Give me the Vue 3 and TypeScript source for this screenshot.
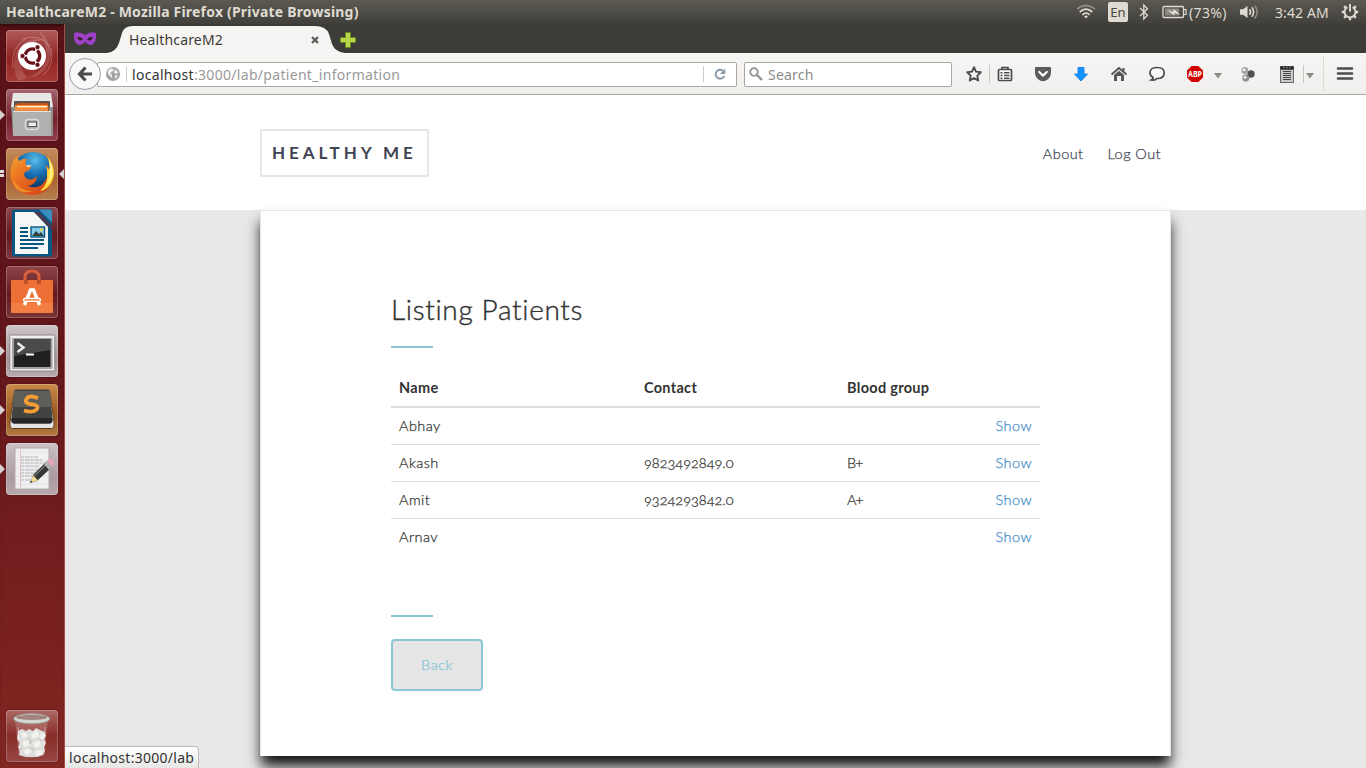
<script setup lang="ts">
interface Patient {
  name: string
  contact: string
  blood: string
}

const patients: Patient[] = [
  { name: 'Abhay', contact: '', blood: '' },
  { name: 'Akash', contact: '9823492849.0', blood: 'B+' },
  { name: 'Amit', contact: '9324293842.0', blood: 'A+' },
  { name: 'Arnav', contact: '', blood: '' },
]
</script>

<template>
  <div class="desktop">
    <header class="panel">
      <span class="window-title">HealthcareM2 - Mozilla Firefox (Private Browsing)</span>
      <div class="indicators">
        <svg class="wifi" width="20" height="16" viewBox="0 0 20 16" fill="none" stroke-width="1.7">
          <path d="M1 5.2Q10-2.2 19 5.2" stroke="#8e8b82" />
          <path d="M3.7 8Q10 2.2 16.3 8M6.4 10.8Q10 7.2 13.6 10.8" stroke="#dfdbd2" />
          <path d="M8 12.2Q10 10.8 12 12.2L10 14.4z" fill="#dfdbd2" />
        </svg>
        <span class="lang">En</span>
        <svg class="bt" width="10" height="18" viewBox="0 0 10 18" fill="none" stroke="#dfdbd2" stroke-width="1.3">
          <path d="M1 5L8.5 12.3 4.8 16V2L8.5 5.7 1 13" />
        </svg>
        <svg class="battery" width="25" height="14" viewBox="0 0 25 14">
          <rect x="1" y="1.5" width="20.5" height="11" rx="1" fill="none" stroke="#dfdbd2" stroke-width="1.3" />
          <path d="M22 4.5h2v5h-2" fill="none" stroke="#dfdbd2" stroke-width="1.2" />
          <rect x="3" y="3.5" width="14" height="7" fill="#8d8a81" />
          <path d="M5 4.5l6.5 2.8V4l7 6-6.2-2.4v2.9z" fill="#f1eee7" />
        </svg>
        <span class="percent">(73%)</span>
        <svg class="volume" width="20" height="16" viewBox="0 0 20 16" fill="none" stroke-width="1.6">
          <path d="M0 5.2h3L7.5 2v12L3 10.8H0z" fill="#dfdbd2" />
          <path d="M9.6 5.3Q11.5 8 9.6 10.7M12 3.3Q15.2 8 12 12.7" stroke="#dfdbd2" />
          <path d="M14.8 1.5Q19.6 8 14.8 14.5" stroke="#8e8b82" />
        </svg>
        <span class="clock">3:42 AM</span>
        <svg class="gear" width="18" height="18" viewBox="-9 -9 18 18" fill="none" stroke="#dfdbd2">
          <path d="M-2.6-4.9A5.5 5.5 0 1 0 2.6-4.9" stroke-width="1.9" />
          <path d="M0-8V-.5" stroke-width="1.9" />
          <path d="M6 0H8.2M-6 0H-8.2M0 6V8.2M4.2 4.2l1.6 1.6M-4.2 4.2l-1.6 1.6M4.2-4.2l1.6-1.6M-4.2-4.2l-1.6-1.6" stroke-width="2.4" />
        </svg>
      </div>
    </header>

    <div class="workspace">
      <nav class="launcher">
        <div class="tile dash">
          <svg viewBox="0 0 52 52">
            <path d="M12 51Q3 30 14 17Q24 6 41 10Q24 10 17 21Q10 34 21 48Z" fill="#fff" opacity=".14" />
            <path d="M33 1Q49 15 44 31Q38 46 21 48Q36 43 40 30Q43 17 33 1Z" fill="#fff" opacity=".16" />
            <path d="M7 38Q4 19 19 9M45 18Q49 35 37 45M16 9Q34 3 43 16" fill="none" stroke="#f4cdc8" stroke-opacity=".35" />
            <circle cx="26" cy="26" r="14" fill="#fff" />
            <circle cx="26.5" cy="26" r="7.2" fill="none" stroke="#671018" stroke-width="3.3" stroke-dasharray="13.1 2" stroke-dashoffset="6.5" />
            <g fill="#671018" stroke="#fff" stroke-width=".7"><circle cx="16.5" cy="26" r="2.5" /><circle cx="31.5" cy="17.2" r="2.5" /><circle cx="31.5" cy="34.8" r="2.5" /></g>
          </svg>
        </div>
        <div class="tile files running">
          <svg viewBox="0 0 52 52">
            <path d="M7 4h38l2 14H5z" fill="#e7e7e5" /><path d="M8 12h36v11H8z" fill="#5d5350" />
            <path d="M9 16l4-2h29l1 8H9z" fill="#c55316" /><path d="M9 16h33v6H9z" fill="#ef8e43" />
            <path d="M11 17h30v1.3H11z" fill="#fff1d2" /><path d="M5 18h4v5h34v-5h4v29H7z" fill="#8e8e8c" />
            <rect x="7" y="22" width="38" height="25" rx="1" fill="#b0b0ae" /><path d="M7 22h38v1H7z" fill="#e0e0df" />
            <rect x="19.5" y="30.5" width="13" height="10" rx="2.5" fill="#aaa" stroke="#ddd" stroke-width="1.4" />
            <rect x="22" y="33" width="8.5" height="4.5" fill="#eee" stroke="#55534f" />
          </svg>
        </div>
        <div class="tile firefox running double focused">
          <svg viewBox="0 0 52 52">
            <defs>
              <radialGradient id="globe" cx=".55" cy=".2" r=".7"><stop stop-color="#57bce7" /><stop offset=".55" stop-color="#166caf" /><stop offset="1" stop-color="#07335f" /></radialGradient>
              <linearGradient id="fox" x1="0" y1="0" x2="1" y2="1"><stop stop-color="#f5a029" /><stop offset=".45" stop-color="#e86821" /><stop offset="1" stop-color="#ca3b15" /></linearGradient>
            </defs>
            <circle cx="27" cy="24" r="20" fill="url(#globe)" />
            <path d="M41 9C50 17 50 34 41 41C34 49 17 49 9 40C2 31 4 19 8 12L11 8Q12 11 13 13Q17 10 21 11Q19 13 20 17L25 18Q25 22 19 24Q17 27 20 30Q25 34 31 28Q31 36 22 38Q33 42 39 33Q43 28 40 17Q44 20 43 23Q45 16 41 9Z" fill="url(#fox)" />
            <path d="M41 9C50 17 50 32 42 39Q39 42 34 43Q43 35 41 26Q42 21 39 17L43 22Q45 16 41 9Z" fill="#ffd839" />
            <path d="M43 12Q48 20 46 29Q43 35 40 37Q46 27 44 21Z" fill="#fff38e" /><path d="M20 17l6 .5-4 2z" fill="#f8e6ca" />
            <path d="M7 31Q12 43 27 43Q16 47 9 39z" fill="#f2a435" opacity=".7" />
          </svg>
        </div>
        <div class="tile writer">
          <svg viewBox="0 0 52 52">
            <path d="M8 2.5h36q2 0 2 2v43q0 2-2 2H8q-2 0-2-2v-43q0-2 2-2z" fill="#075683" /><path d="M9 5h19l14 15v27H9z" fill="#f5f6f6" />
            <path d="M33 2.5h11q2 0 2 2v11z" fill="#398ebb" /><path d="M28 5h5l13 14v4z" fill="#7d232c" opacity=".6" />
            <path d="M14 21h8M14 25h8M14 29h8M14 33h24M14 37h24M14 41h18" stroke="#075683" stroke-width="1.8" />
            <rect x="25" y="20" width="13.5" height="10" fill="#87cbea" stroke="#075683" stroke-width="1.4" />
            <path d="M26 29l4-5 3 3 2-2 3 4z" fill="#33413f" /><circle cx="35.5" cy="22.7" r="1.6" fill="#e9d547" />
          </svg>
        </div>
        <div class="tile software">
          <svg viewBox="0 0 52 52">
            <rect x="5" y="14" width="42" height="33" rx="1" fill="#ed7136" /><path d="M5 37h42v10H5z" fill="#fc995d" opacity=".35" />
            <path d="M19 17v-7Q20 5 26 5t7 5v7" fill="none" stroke="#d8603d" stroke-width="3" /><path d="M18 14v4h4v-4M31 14v4h4v-4" fill="#bc4f2e" />
            <path d="M18.5 39L24.5 24h3l6 15" fill="none" stroke="#fff" stroke-width="3.4" /><rect x="17.5" y="32.5" width="17" height="2.8" rx="1.4" fill="#ee7137" stroke="#fff" stroke-width="1.4" />
          </svg>
        </div>
        <div class="tile terminal running">
          <svg viewBox="0 0 52 52">
            <rect x="3.8" y="10" width="45" height="36" rx="1.5" fill="#eee" stroke="#898785" /><rect x="6" y="13" width="40.5" height="31" fill="#a5a3a2" />
            <rect x="8" y="14" width="36.5" height="28" fill="#20201f" /><path d="M8 14h36.5v11L8 31z" fill="#6d6d6b" opacity=".55" />
            <path d="M11.5 18l6 4.5-6 4.5" fill="none" stroke="#eee" stroke-width="2.4" /><path d="M20 29.5h8" stroke="#fff" stroke-width="2" />
          </svg>
        </div>
        <div class="tile sublime running">
          <svg viewBox="0 0 52 52">
            <path d="M8 10L4 38v4q0 2.5 2.5 2.5h39q2.5 0 2.5-2.5v-4L44 10z" fill="#e5e4e2" stroke="#5a3a1c" />
            <path d="M10 5.5h32q2 0 2 2l2.5 28q0 4-3 4h-35q-3 0-3-4L8 7.5q0-2 2-2z" fill="#424241" /><path d="M8 7h36l2 16H6.5z" fill="#777774" opacity=".5" />
            <path d="M5.7 34h40.6v2.5q0 3-3 3h-35q-3 0-3-3z" fill="#272726" />
            <path d="M32 14.2Q22 10 20 16Q19 20 27 20.5Q34 22 30 26Q26 29 18 26.5" fill="none" stroke="#f79d35" stroke-width="3.8" />
          </svg>
        </div>
        <div class="tile editor running">
          <svg viewBox="0 0 52 52">
            <path d="M9 5h34v41H9z" fill="#f0eff0" stroke="#b1abac" /><path d="M14.5 5v41" stroke="#efb8bc" />
            <path d="M10 9h32M10 17h32M10 25h32M10 33h32M10 41h32" stroke="#dde4ec" />
            <path d="M15 14h17M15 17h21M15 20h24M15 23h18M15 27h21M15 30h16M15 33h15M15 37h10" stroke="#a5a2a4" stroke-width=".8" stroke-dasharray="3 .8 5 .6" />
            <path d="M24 40l3-8L41 18l5 6-15 14z" fill="#353734" /><path d="M28.5 33L42 19.5" stroke="#777" stroke-width="1.2" /><path d="M24 40l3-8 5 5.5z" fill="#eeda94" /><path d="M24 40l1-2.5 1.7 1.6z" fill="#333" />
            <path d="M38 21l3-3 5 6-3 3z" fill="#afb4b5" /><path d="M41 18q3-4 6 0 2 3-1 6z" fill="#eca2bc" />
          </svg>
        </div>
        <div class="tile trash">
          <svg viewBox="0 0 52 52">
            <path d="M9 9h33l-3.5 36q-13 5-26 0z" fill="#e5b8b1" opacity=".28" />
            <path d="M12 21l4-2 4 2 3-2 4 2 3-3 4 2 5 2 1 4-2 3 2 4-2 4 1 4-2 4-6 2H20l-7-2 1-4-2-4 2-4-3-4z" fill="#dededb" />
            <path d="M15 23l4-1 3 4-5 2zM25 24l6-4 2 6-6 3zM35 23l4 2-3 5-3-3zM16 32l5-2 3 5-6 2zM27 33l6-2 2 5-6 2zM17 41l5-3 4 4-6 3zM29 41l6-1 2 4-7 2z" fill="#f2f2f0" />
            <path d="M22 28l3 3-1 3M33 28l3 3M25 38l3 2M13 38l3 1" stroke="#b9b5b2" fill="none" />
            <ellipse cx="25.7" cy="8.8" rx="18" ry="5" fill="#d4d8d3" stroke="#999f99" /><ellipse cx="25.7" cy="7.4" rx="15.5" ry="2.6" fill="#a18480" />
            <path d="M12 17l2 25M39 17l-2 25" stroke="#fff" opacity=".4" />
          </svg>
        </div>
      </nav>

      <main class="browser">
        <div class="tabstrip">
          <svg class="mask" width="24" height="16" viewBox="0 0 24 16">
            <path d="M1 2Q6 0 12 4Q18 0 23 2Q24 12 18 14Q14 14 12 10.5Q10 14 6 14Q0 12 1 2z" fill="#9d42c7" />
            <path d="M4 6.2q4-1 6 2.2-4 2.8-6-2.2zM20 6.2q-4-1-6 2.2 4 2.8 6-2.2z" fill="#34252f" />
          </svg>
          <div class="tab">
            <svg class="tab-shape" width="240" height="29" viewBox="0 0 240 29">
              <path d="M0 29Q9 28 12 19L15 9Q17 2 26 2H208Q219 2 222 10L225 20Q228 28 238 29z" fill="#f6f5f3" />
            </svg>
            <span class="tab-label">HealthcareM2</span>
            <svg class="close" width="8" height="8" viewBox="0 0 8 8"><path d="M1 1l6 6M7 1L1 7" stroke="#595957" stroke-width="2.2" /></svg>
          </div>
          <svg class="plus" width="16" height="16" viewBox="0 0 16 16"><path d="M5.5.5h5v5h5v5h-5v5h-5v-5h-5v-5h5z" fill="#b9d64b" stroke="#658b20" /></svg>
        </div>

        <div class="toolbar">
          <div class="back-button">
            <svg width="16" height="16" viewBox="0 0 16 16" fill="none" stroke="#4c4c4c" stroke-width="3.2"><path d="M8.5 1.5L2.5 8l6 6.5M3 8h12" /></svg>
          </div>
          <div class="urlbar">
            <svg class="globe" width="14" height="14" viewBox="0 0 14 14"><circle cx="7" cy="7" r="7" fill="#a2a2a2" /><path d="M2 3l4-2 2 2-2 2-2 1 2 2v3L4 9 2 7zM9 2l3 3-1 2-3-1zM9 8l3 1-3 3z" fill="#efefef" /></svg>
            <i class="url-divider"></i>
            <span class="url"><b>localhost</b>:3000/lab/patient_information</span>
            <i class="reload-divider"></i>
            <svg class="reload" width="12" height="12" viewBox="0 0 12 12"><path d="M9 2.7A4.5 4.5 0 1 0 10.3 8" fill="none" stroke="#8b9aaa" stroke-width="1.9" /><path d="M11.3.5v5.4H6z" fill="#8b9aaa" /></svg>
          </div>
          <div class="searchbar">
            <svg width="14" height="14" viewBox="0 0 14 14" fill="none" stroke="#929292"><circle cx="5" cy="5" r="3.8" stroke-width="1.8" /><path d="M8 8l5 5" stroke-width="2.4" /></svg>
            <span>Search</span>
          </div>
          <svg class="tool star" viewBox="-14 -14 28 28"><path d="M0-6.8L2-2.4 6.8-1.8 3.3 1.6 4.2 6.5 0 4.1-4.2 6.5-3.3 1.6-6.8-1.8-2-2.4z" fill="none" stroke="#4c4c4c" stroke-width="1.9" stroke-linejoin="round" /></svg>
          <i class="split first"></i>
          <svg class="tool clip" viewBox="-14 -14 28 28"><path d="M-5.5-4.5h11q1 0 1 1v9q0 1-1 1h-11q-1 0-1-1v-9q0-1 1-1zM-3-4v-2.5h6V-4" fill="#fff" stroke="#4c4c4c" stroke-width="1.7" /><path d="M-4.5-1.2h2M-1-1.2h5.5M-4.5 1.5h2M-1 1.5h5.5M-4.5 4.2h2M-1 4.2h5.5" stroke="#4c4c4c" stroke-width="1.4" /></svg>
          <svg class="tool" viewBox="-14 -14 28 28"><path d="M-7-7H7q1 0 1 1v4.5Q8 4 3 6.5 0 8-3 6.5-8 4-8-1.5V-6q0-1 1-1z" fill="#5b5b5b" /><path d="M-3.8-2L0 1.6 3.8-2" fill="none" stroke="#fff" stroke-width="2.2" stroke-linecap="round" stroke-linejoin="round" /></svg>
          <svg class="tool" viewBox="-14 -14 28 28"><path d="M-3-6.5h6V0h3.5L0 7-6.5 0H-3z" fill="#1493ff" stroke="#0a77e5" stroke-width=".8" /></svg>
          <svg class="tool" viewBox="-14 -14 28 28"><path d="M-7.5.5L0-6 7.5.5M4.5-6v3" fill="none" stroke="#555" stroke-width="2" /><path d="M-5 1L0-3.2 5 1v6H2V2h-4v5h-3z" fill="#555" /></svg>
          <svg class="tool" viewBox="-14 -14 28 28"><path d="M-5.8 6q2-.8 2-2.4Q-7 2-7-1.2C-7-5-3.7-6.500 0-6.500S7.200-5 7.200-1.200 4 4.500 0 4.500q-2 2.300-5.800 1.500z" fill="#faf9f8" stroke="#4c4c4c" stroke-width="1.700" /></svg>
          <svg class="tool" viewBox="-14 -14 28 28"><path d="M-3.400-8h6.800L8-3.400v6.800L3.400 8h-6.800L-8 3.400v-6.800z" fill="#d20000" /><text x="0" y="3" text-anchor="middle" textLength="14" lengthAdjust="spacingAndGlyphs" class="abp">ABP</text></svg>
          <svg class="caret" viewBox="0 0 10 8"><path d="M1 1h8L5 6.5z" fill="#8b8b88" /></svg>
          <svg class="tool dots" viewBox="-14 -14 28 28"><circle cx="3" cy="0" r="3.7" fill="#505050" /><circle cx="-3.2" cy="-3.5" r="3.4" fill="#a2a2a2" /><circle cx="-2.2" cy="4" r="3.5" fill="#8e8e8e" /><circle cx="-4" cy="-4.2" r="1.5" fill="#eee" /><circle cx="-3" cy="3.2" r="1.5" fill="#eee" /></svg>
          <svg class="tool notes" viewBox="-14 -14 28 28"><rect x="-6.5" y="-7.5" width="13" height="16" fill="#c9c9c9" stroke="#666" /><path d="M-5-6H5" stroke="#222" stroke-width="3.5" stroke-linecap="round" /><path d="M-3-7.500v2M0-7.500v2M3-7.500v2" stroke="#aaa" /><path d="M-4-2.500h8M-4-.5h8M-4 1.500h8M-4 3.500h8M-4 5.500h8" stroke="#444" stroke-width="1.200" /></svg>
          <i class="split second"></i>
          <svg class="caret narrow" viewBox="0 0 10 8"><path d="M1 1h8L5 6.5z" fill="#8b8b88" /></svg>
          <i class="split tall"></i>
          <svg class="tool menu" viewBox="-14 -14 28 28"><path d="M-7-5.5H7M-7-.5H7M-7 4.5H7" stroke="#4c4c4c" stroke-width="2.6" stroke-linecap="round" /></svg>
        </div>

        <section class="page">
          <header class="site-header">
            <a class="brand">HEALTHY ME</a>
            <div class="site-nav"><a>About</a><a>Log Out</a></div>
          </header>
          <article class="sheet">
            <h1>Listing Patients</h1>
            <hr />
            <table>
              <colgroup><col class="c-name" /><col class="c-contact" /><col class="c-blood" /><col class="c-show" /></colgroup>
              <thead><tr><th>Name</th><th>Contact</th><th>Blood group</th><th></th></tr></thead>
              <tbody>
                <tr v-for="p in patients" :key="p.name">
                  <td>{{ p.name }}</td><td class="number">{{ p.contact }}</td><td class="blood">{{ p.blood }}</td><td class="show"><a>Show</a></td>
                </tr>
              </tbody>
            </table>
            <hr class="lower" />
            <button type="button">Back</button>
          </article>
          <div class="status">localhost:3000/lab</div>
        </section>
      </main>
    </div>
  </div>
</template>

<style>
html, body { margin: 0; overflow: hidden; }
</style>

<style scoped>
* { box-sizing: border-box; }
.desktop { width: 1366px; height: 768px; overflow: hidden; font: 15px "Noto Sans", "Open Sans", sans-serif; color: #3c3b37; }
svg { display: block; flex: none; }
i { display: block; flex: none; }
.panel { height: 24px; display: flex; align-items: center; justify-content: space-between; padding: 0 8px 0 6px; color: #dfdbd2; background: linear-gradient(#5b5952, #403f3a); white-space: nowrap; }
.window-title { font: 700 14px/24px "Noto Sans", sans-serif; letter-spacing: .2px; }
.indicators { display: flex; align-items: center; width: 282px; height: 24px; flex: none; }
.lang { width: 20px; height: 20px; margin-left: 12px; border-radius: 2px; background: #dfdbd2; color: #474641; font-size: 13px; line-height: 20px; text-align: center; flex: none; }
.bt { margin-left: 11px; }
.battery { margin-left: 13px; }
.percent { width: 39px; margin-left: 2px; font-size: 14px; letter-spacing: .35px; flex: none; }
.volume { margin-left: 12px; }
.clock { width: 55px; margin-left: 15px; font-size: 14px; letter-spacing: .1px; flex: none; }
.gear { margin-left: 11px; }
.workspace { display: flex; height: 744px; }

.launcher { width: 65px; padding: 6px 0 6px 6px; display: flex; flex-direction: column; gap: 7px; flex: none; background: linear-gradient(#5a1117, #64161b 45%, #832621); border-right: 1px solid #a64e43; box-shadow: inset 0 4px 4px -3px #220507; }
.tile { position: relative; width: 52px; height: 52px; border-radius: 4px; box-shadow: inset 0 0 0 1px rgba(255,255,255,.22), 0 0 2px rgba(0,0,0,.35); }
.tile svg { width: 52px; height: 52px; }
.dash { background: linear-gradient(#b15b5b, #8f2322 55%, #a63b34); }
.files { background: linear-gradient(#a76570, #74202c 55%, #92404f); }
.firefox { background: linear-gradient(#c58c5d, #a86333 60%, #b8804f); }
.writer { background: linear-gradient(#8b4850, #621a20 55%, #7b3840); }
.software { background: linear-gradient(#8d454a, #661a1e 55%, #7a3538); }
.terminal { background: linear-gradient(#d0c7c8, #a29495 65%, #b7abad); }
.sublime { background: linear-gradient(#c88a4b, #99591e 60%, #b27a43); }
.editor { background: linear-gradient(#ccc2c4, #a99a9d 65%, #b9abad); }
.trash { margin-top: auto; background: linear-gradient(#ad6965, #872c28 50%, #984743); }
.running::before { content: ""; position: absolute; left: -6px; top: 21px; border: 5px solid transparent; border-left-color: #d8cfd0; border-right: 0; }
.double::before { border: 0; width: 4px; height: 7px; top: 22px; background: linear-gradient(#ddd 3px, transparent 3px 4px, #ddd 4px); }
.focused::after { content: ""; position: absolute; right: -6px; top: 21px; border: 5px solid transparent; border-right-color: #d8cfd0; border-left: 0; }

.browser { flex: 1; min-width: 0; }
.tabstrip { display: flex; height: 29px; background: #3c3b37; }
.mask { margin: 7px 0 0 8px; }
.tab { position: relative; display: flex; align-items: center; width: 240px; height: 29px; margin-left: 10px; padding: 3px 28px 0 22px; justify-content: space-between; }
.tab-shape { position: absolute; inset: 0; }
.tab-label { position: relative; top: -1px; font-size: 14px; letter-spacing: .15px; }
.close { position: relative; }
.plus { margin: 8px 0 0 -7px; }

.toolbar { display: flex; align-items: center; height: 42px; border-top: 1px solid #f9f9f8; border-bottom: 1px solid #aaa6a0; background: linear-gradient(#f6f5f4, #f0efed); }
.back-button { position: relative; z-index: 1; display: flex; align-items: center; justify-content: center; width: 32px; height: 32px; margin-left: 4px; border: 1px solid #989da6; border-radius: 50%; background: #f9f9f8; flex: none; }
.urlbar { display: flex; align-items: center; width: 640px; height: 25px; margin-left: -4px; padding-left: 8px; border: 1px solid #aaa7a0; border-radius: 2px; background: #fff; flex: none; }
.url-divider { width: 1px; height: 16px; margin-left: 6px; background: #ccc; }
.url { width: 576px; padding-left: 5px; color: #999; font-size: 14px; white-space: nowrap; letter-spacing: .31px; }
.url b { color: #333; font-weight: 400; }
.reload-divider { width: 1px; height: 16px; background: #ccc; }
.reload { margin-left: 10px; }
.searchbar { display: flex; align-items: center; gap: 5px; width: 208px; height: 25px; margin-left: 7px; padding-left: 4px; border: 1px solid #aaa7a0; border-radius: 2px; background: #fff; color: #8d8d8b; font-size: 14px; letter-spacing: .2px; flex: none; }
.tool { width: 28px; height: 28px; margin-left: 10px; }
.star { margin-left: 8px; }
.split { width: 1px; height: 18px; background: #c9c7c4; }
.first { margin-left: 1px; }
.caret { width: 10px; height: 8px; margin-left: 4px; margin-top: 3px; }
.caret.narrow { margin-left: 1px; }
.tool.clip { margin-left: 1px; }
.dots, .notes { margin-left: 11px; }
.second { margin-left: 2px; }
.tall { height: 36px; margin-left: 8px; background: #dddbd8; }
.tool.menu { margin-left: 7px; }
.abp { font: 700 8.5px "Noto Sans", sans-serif; fill: #fff; }

.page { position: relative; height: 673px; overflow: hidden; background: #e8e8e8; font-family: Lato, sans-serif; color: #333; }
.site-header { display: flex; align-items: flex-start; justify-content: space-between; height: 115px; padding: 34px 205px 0 195px; background: #fff; color: #404453; }
.brand { width: 169px; height: 48px; padding-left: 10px; border: 2px solid #e7e7e7; font-size: 17px; font-weight: 700; line-height: 44px; letter-spacing: 3.9px; white-space: nowrap; }
.site-nav { display: flex; gap: 24px; padding-top: 15px; font-size: 14.5px; font-weight: 300; line-height: 20px; letter-spacing: .45px; white-space: nowrap; -webkit-text-stroke: .25px; }
.sheet { width: 911px; height: 546px; margin-left: 195px; padding: 79px 130px 0; border: 1px solid #e5e5e5; border-bottom: 0; background: #fff; box-shadow: 0 11px 13px -1px #111; }
h1 { margin: 0; height: 40px; font-size: 28px; line-height: 38px; font-weight: 300; letter-spacing: .65px; font-variant-ligatures: none; -webkit-text-stroke: .4px; }
hr { width: 42px; height: 2px; margin: 16px 0 22px; border: 0; background: #8bc5d8; }
table { width: 649px; table-layout: fixed; border-collapse: separate; border-spacing: 0; font-size: 14.5px; line-height: 20px; letter-spacing: .3px; }
.c-name { width: 245px; } .c-contact { width: 203px; } .c-blood { width: 149px; } .c-show { width: 52px; }
th, td { height: 37px; padding: 8px; text-align: left; white-space: nowrap; }
th { height: 38px; border-bottom: 2px solid #ddd; }
td { border-top: 1px solid #ddd; font-weight: 300; letter-spacing: .45px; -webkit-text-stroke: .25px; }
tbody tr:first-child td { height: 36px; border-top: 0; }
.number { font-variant-numeric: oldstyle-nums; letter-spacing: 0; }
.blood { letter-spacing: -1.2px; }
.show { padding-left: 0; text-align: right; color: #428bca; }
hr.lower { margin: 60px 0 22px; }
button { display: block; width: 92px; height: 52px; padding: 0 0 2px; border: 2px solid #8bc5d8; border-radius: 4px; background: #e6e6e6; color: #8bc5d8; font: 300 14.5px Lato, sans-serif; letter-spacing: .5px; -webkit-text-stroke: .25px; }
.status { position: absolute; left: 0; bottom: 0; width: 134px; height: 22px; padding: 0 0 0 4px; border: 1px solid #bdbbb7; border-width: 1px 1px 0 0; border-radius: 0 4px 0 0; background: linear-gradient(#fff, #e7e7e5); font: 14px/21px "Noto Sans", sans-serif; letter-spacing: .28px; white-space: nowrap; }
</style>
